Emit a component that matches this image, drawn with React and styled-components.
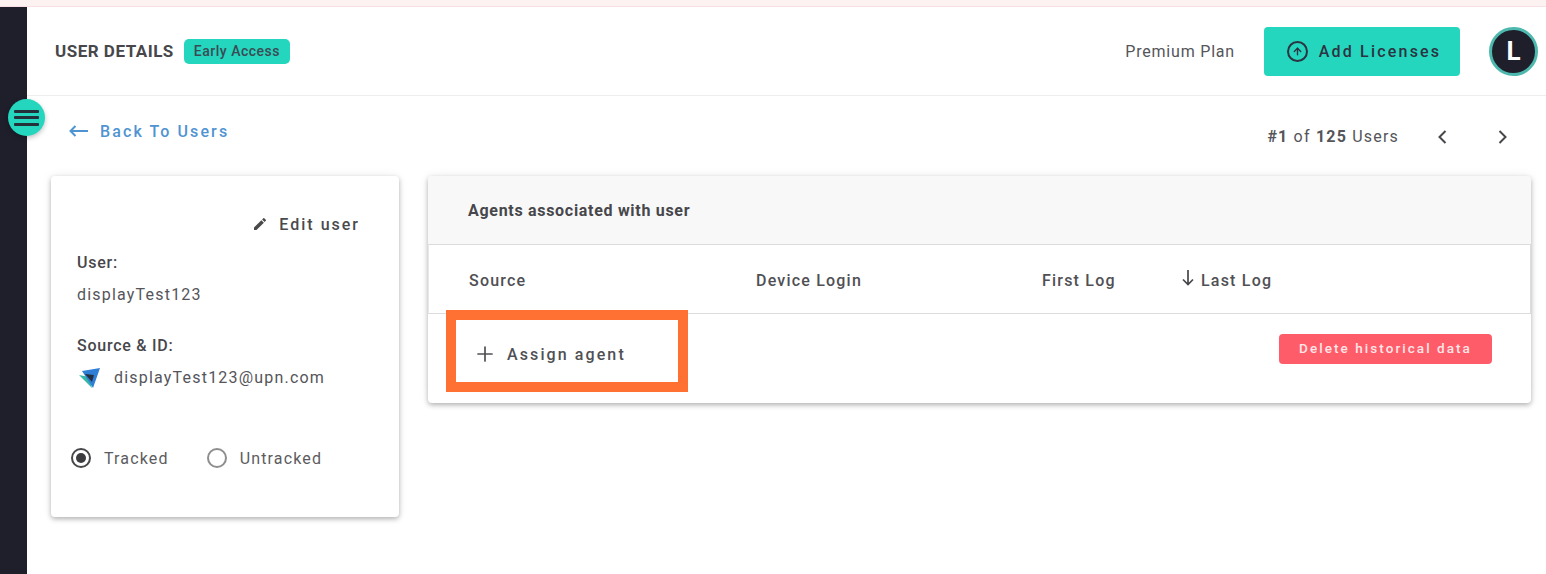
import { createGlobalStyle } from "styled-components";
import styled from "styled-components";
import { ArrowUp, Plus } from "lucide-react";

const GlobalStyle = createGlobalStyle`
  html, body {
    margin: 0;
    padding: 0;
    background: #fff;
    overflow: hidden;
  }
  * { box-sizing: border-box; }
  body {
    font-family: Roboto, "Liberation Sans", sans-serif;
    color: #4a4a4d;
  }
`;

const Page = styled.div`
  position: relative;
  width: 1546px;
  height: 574px;
  overflow: hidden;
`;

const TopStrip = styled.div`
  height: 7px;
  background: #fdf2f2;
  border-bottom: 1px solid #f8dfe4;
`;

const Shell = styled.div`
  display: flex;
  height: 567px;
`;

const SideBar = styled.div`
  width: 27px;
  background: #1e1f2b;
`;

const Main = styled.div`
  flex: 1;
  min-width: 0;
`;

const Header = styled.header`
  height: 89px;
  display: flex;
  align-items: center;
  padding: 0 8px 0 28px;
  border-bottom: 1px solid #eeeef0;
`;

const Title = styled.h1`
  margin: 0 10px 0 0;
  font-size: 17px;
  font-weight: 700;
  letter-spacing: 0.5px;
  color: #47474b;
`;

const Badge = styled.span`
  background: #24d6bd;
  border-radius: 5px;
  padding: 0 10px;
  height: 25px;
  line-height: 25px;
  font-size: 14px;
  font-weight: 500;
  letter-spacing: 0.5px;
  color: #3b4b55;
`;

const HeaderRight = styled.div`
  margin-left: auto;
  display: flex;
  align-items: center;
`;

const Plan = styled.span`
  font-size: 16px;
  letter-spacing: 0.8px;
  color: #55555a;
  margin-right: 29px;
`;

const AddButton = styled.button`
  width: 196px;
  height: 49px;
  border: 0;
  border-radius: 4px;
  background: #24d6bd;
  display: flex;
  align-items: center;
  justify-content: center;
  gap: 11px;
  font-family: inherit;
  font-size: 16px;
  font-weight: 500;
  letter-spacing: 2.2px;
  color: #2c3341;
  padding: 0 0 0 4px;
`;

const CircleIcon = styled.span`
  width: 21px;
  height: 21px;
  border: 2px solid #2c3341;
  border-radius: 50%;
  display: flex;
  align-items: center;
  justify-content: center;
`;

const Avatar = styled.div`
  width: 49px;
  height: 49px;
  margin-left: 29px;
  border-radius: 50%;
  background: #1e1f2b;
  border: 3px solid #4db8ad;
  display: flex;
  align-items: center;
  justify-content: center;
  color: #fff;
  font-size: 26px;
  font-weight: 700;
`;

const Content = styled.div`
  padding: 0 15px 0 24px;
`;

const TopRow = styled.div`
  height: 80px;
  display: flex;
  align-items: flex-start;
  justify-content: space-between;
`;

const BackLink = styled.a`
  margin: 25px 0 0 18px;
  display: flex;
  align-items: center;
  gap: 12px;
  height: 20px;
  color: #4f94d1;
  font-size: 16px;
  font-weight: 500;
  letter-spacing: 2.1px;
`;

const Pager = styled.div`
  margin-top: 30px;
  display: flex;
  align-items: center;
  height: 20px;
  font-size: 16px;
  letter-spacing: 1.2px;
  color: #55555a;

  b { font-weight: 700; }
`;

const PagerIcons = styled.span`
  display: flex;
  align-items: center;
  gap: 51px;
  margin: 2px 23px 0 38px;
  color: #47474b;
`;

const Columns = styled.div`
  display: flex;
  align-items: flex-start;
  gap: 29px;
`;

const Card = styled.section`
  background: #fff;
  border-radius: 4px;
  box-shadow: 0 2px 5px rgba(0, 0, 0, 0.28), 0 0 12px rgba(0, 0, 0, 0.06);
`;

const UserCard = styled(Card)`
  width: 348px;
  height: 341px;
  padding: 37px 26px 0;
`;

const EditRow = styled.div`
  display: flex;
  justify-content: flex-end;
  align-items: center;
  gap: 11px;
  height: 22px;
  padding: 0 13px 0 0;
  margin-bottom: 18px;
  font-size: 16px;
  font-weight: 500;
  letter-spacing: 2px;
  color: #4a4a4d;
`;

const Label = styled.div`
  font-size: 16px;
  font-weight: 500;
  letter-spacing: 0.75px;
  color: #47474b;
  height: 20px;
  line-height: 20px;
`;

const Value = styled.div`
  margin-top: 12px;
  height: 20px;
  line-height: 20px;
  font-size: 16px;
  letter-spacing: 1.2px;
  color: #55555a;
  display: flex;
  align-items: center;
  gap: 13px;
`;

const Field = styled.div`
  margin-bottom: 31px;
`;

const RadioRow = styled.div`
  display: flex;
  align-items: center;
  margin: 60px 0 0 -6px;
`;

const RadioOption = styled.label`
  display: flex;
  align-items: center;
  gap: 13px;
  margin-right: 38px;
  font-size: 16px;
  letter-spacing: 1.15px;
  color: #5c5c60;
`;

const RadioDot = styled.span`
  width: 20px;
  height: 20px;
  border-radius: 50%;
  border: 2px solid ${(p) => (p.$on ? "#47474b" : "#8e8e90")};
  display: flex;
  align-items: center;
  justify-content: center;

  &::after {
    content: "";
    width: 10px;
    height: 10px;
    border-radius: 50%;
    background: ${(p) => (p.$on ? "#3c3c40" : "transparent")};
  }
`;

const AgentsCard = styled(Card)`
  flex: 1;
  height: 227px;
  overflow: hidden;
`;

const AgentsTitle = styled.div`
  height: 69px;
  display: flex;
  align-items: center;
  padding: 0 0 0 40px;
  background: #f8f8f9;
  border-bottom: 1px solid #dcdcdf;
  font-size: 16px;
  font-weight: 700;
  letter-spacing: 0.7px;
  color: #47474b;
`;

const TableHead = styled.div`
  height: 69px;
  display: grid;
  grid-template-columns: 287px 286px 140px 1fr;
  align-items: center;
  padding: 2px 0 0 40px;
  border-right: 1px solid #dcdcdf;
  border-left: 1px solid #e8e8ea;
  border-bottom: 1px solid #dcdcdf;
  font-size: 16px;
  font-weight: 500;
  letter-spacing: 1.2px;
  color: #505054;
`;

const HeadCell = styled.span`
  display: flex;
  align-items: center;

  svg {
    margin: -5px 7px 0 0;
  }
`;

const AgentsFooter = styled.div`
  height: 89px;
  display: flex;
  align-items: flex-start;
  justify-content: space-between;
  padding: 20px 39px 0 45px;
`;

const AssignButton = styled.button`
  display: flex;
  align-items: center;
  gap: 10px;
  height: 40px;
  padding: 0;
  border: 0;
  background: none;
  font-family: inherit;
  font-size: 16px;
  font-weight: 500;
  letter-spacing: 2.1px;
  color: #505054;
`;

const DeleteButton = styled.button`
  width: 213px;
  height: 30px;
  border: 0;
  border-radius: 4px;
  background: #ff5c6a;
  color: #ffe6e8;
  font-family: inherit;
  font-size: 13.5px;
  font-weight: 500;
  letter-spacing: 2.05px;
  padding: 0 0 2px;
`;

const MenuButton = styled.button`
  position: absolute;
  left: 8px;
  top: 99px;
  width: 37px;
  height: 37px;
  border: 0;
  padding: 0;
  border-radius: 50%;
  background: #24d6bd;
  box-shadow: 0 2px 5px rgba(0, 0, 0, 0.25);
  display: flex;
  flex-direction: column;
  align-items: center;
  justify-content: center;
  gap: 3.5px;
`;

const MenuLine = styled.span`
  width: 25px;
  height: 3px;
  border-radius: 1px;
  background: #24303a;
`;

const Highlight = styled.div`
  position: absolute;
  left: 446px;
  top: 310px;
  width: 242px;
  height: 82px;
  border: 10px solid #ff7033;
`;

const SourceLogo = () => (
  <svg width="24" height="22" viewBox="0 0 24 22">
    <path d="M2 8 L12 10 L15 21 Z" fill="#35b8a6" />
    <path d="M5 4 L23 1 L16 21 Z" fill="#2f7fd6" />
    <path d="M8 7 L17 8 L15 15 Z" fill="#243042" />
  </svg>
);

const Pencil = () => (
  <svg width="16" height="16" viewBox="0 0 24 24" fill="#4a4a4d">
    <path d="M3 17.25V21h3.75L17.81 9.94l-3.75-3.75L3 17.25zM20.71 7.04a1 1 0 0 0 0-1.41l-2.34-2.34a1 1 0 0 0-1.41 0l-1.83 1.83 3.75 3.75 1.83-1.83z" />
  </svg>
);

const BackArrow = () => (
  <svg width="19" height="12" viewBox="0 0 19 12" fill="none" stroke="currentColor" strokeWidth="2">
    <path d="M19 6H1.5M6.5 1 1.5 6l5 5" />
  </svg>
);

const PrevIcon = () => (
  <svg width="10" height="14" viewBox="0 0 10 14" fill="none" stroke="currentColor" strokeWidth="2">
    <path d="M8.5 1 2.5 7l6 6" />
  </svg>
);

const NextIcon = () => (
  <svg width="10" height="14" viewBox="0 0 10 14" fill="none" stroke="currentColor" strokeWidth="2">
    <path d="M1.5 1l6 6-6 6" />
  </svg>
);

const SortArrow = () => (
  <svg width="12" height="16" viewBox="0 0 12 16" fill="none" stroke="#47474b" strokeWidth="1.7">
    <path d="M6 0v14.5M1 9.5l5 5 5-5" />
  </svg>
);

export default function App() {
  return (
    <Page>
      <GlobalStyle />
      <TopStrip />
      <Shell>
        <SideBar />
        <Main>
          <Header>
            <Title>USER DETAILS</Title>
            <Badge>Early Access</Badge>
            <HeaderRight>
              <Plan>Premium Plan</Plan>
              <AddButton>
                <CircleIcon>
                  <ArrowUp size={11} strokeWidth={3} />
                </CircleIcon>
                Add Licenses
              </AddButton>
              <Avatar>L</Avatar>
            </HeaderRight>
          </Header>
          <Content>
            <TopRow>
              <BackLink>
                <BackArrow />
                Back To Users
              </BackLink>
              <Pager>
                <span>
                  <b>#1</b> of <b>125</b> Users
                </span>
                <PagerIcons>
                  <PrevIcon />
                  <NextIcon />
                </PagerIcons>
              </Pager>
            </TopRow>
            <Columns>
              <UserCard>
                <EditRow>
                  <Pencil />
                  Edit user
                </EditRow>
                <Field>
                  <Label>User:</Label>
                  <Value>displayTest123</Value>
                </Field>
                <Field>
                  <Label>Source &amp; ID:</Label>
                  <Value>
                    <SourceLogo />
                    displayTest123@upn.com
                  </Value>
                </Field>
                <RadioRow>
                  <RadioOption>
                    <RadioDot $on />
                    Tracked
                  </RadioOption>
                  <RadioOption>
                    <RadioDot />
                    Untracked
                  </RadioOption>
                </RadioRow>
              </UserCard>
              <AgentsCard>
                <AgentsTitle>Agents associated with user</AgentsTitle>
                <TableHead>
                  <HeadCell>Source</HeadCell>
                  <HeadCell>Device Login</HeadCell>
                  <HeadCell>First Log</HeadCell>
                  <HeadCell>
                    <SortArrow />
                    Last Log
                  </HeadCell>
                </TableHead>
                <AgentsFooter>
                  <AssignButton>
                    <Plus size={24} strokeWidth={1.7} />
                    Assign agent
                  </AssignButton>
                  <DeleteButton>Delete historical data</DeleteButton>
                </AgentsFooter>
              </AgentsCard>
            </Columns>
          </Content>
        </Main>
      </Shell>
      <MenuButton>
        <MenuLine />
        <MenuLine />
        <MenuLine />
      </MenuButton>
      <Highlight />
    </Page>
  );
}
